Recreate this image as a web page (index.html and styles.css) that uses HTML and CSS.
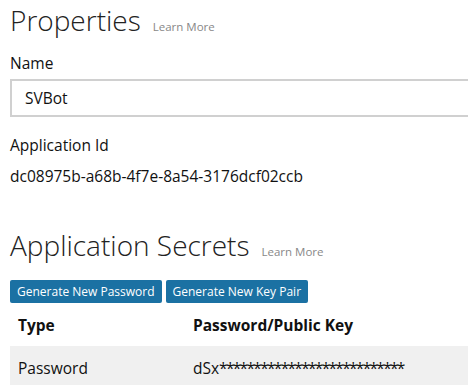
FILE: index.html
```html
<!DOCTYPE html>
<html lang="en">

<head>
    <meta charset="UTF-8">
    <title>Bot Properties</title>
    <link rel="stylesheet" href="styles.css">
</head>

<body>
    <main class="panel">
        <div class="section-head">
            <h1 class="section-title">Properties</h1>
            <a href="#" class="learn-more">Learn More</a>
        </div>

        <label class="field-label" for="bot-name">Name</label>
        <input class="text-input" id="bot-name" type="text" value="SVBot">

        <div class="field-label id-label">Application Id</div>
        <div class="field-value">dc08975b-a68b-4f7e-8a54-3176dcf02ccb</div>

        <div class="section-head secrets">
            <h1 class="section-title">Application Secrets</h1>
            <a href="#" class="learn-more">Learn More</a>
        </div>

        <div class="actions">
            <button class="btn">Generate New Password</button>
            <button class="btn">Generate New Key Pair</button>
        </div>

        <table class="secrets-table">
            <thead>
                <tr>
                    <th class="col-type">Type</th>
                    <th>Password/Public Key</th>
                </tr>
            </thead>
            <tbody>
                <tr>
                    <td>Password</td>
                    <td>dSx<span class="mask">***************************</span></td>
                </tr>
            </tbody>
        </table>
    </main>
</body>

</html>
```

FILE: styles.css
```css
* {
    margin: 0;
    padding: 0;
    box-sizing: border-box;
    font-family: 'Open Sans', 'Noto Sans', sans-serif;
}

body {
    background-color: #fff;
    color: #111;
    overflow: hidden;
}

.panel {
    padding: 0 0 0 10px;
    width: 100%;
}

.section-head {
    display: flex;
    align-items: baseline;
    gap: 12px;
    height: 40px;
}

.section-title {
    font-size: 28px;
    font-weight: 300;
    line-height: 40px;
    color: #222;
}

.learn-more {
    font-size: 11.5px;
    color: #888;
    text-decoration: none;
}

.secrets {
    margin-top: 39px;
}

.field-label {
    display: block;
    font-size: 15.5px;
    margin-top: 13px;
    line-height: 20px;
}

.id-label {
    margin-top: 18px;
}

.field-value {
    font-size: 15.5px;
    margin-top: 11px;
    line-height: 20px;
}

.text-input {
    display: block;
    width: 100%;
    height: 38px;
    margin-top: 6px;
    border: 2px solid #d0d0d0;
    border-right: none;
    padding: 0 13px;
    font-size: 15.5px;
    color: #111;
    outline: none;
}

.actions {
    display: flex;
    gap: 4px;
    margin-top: 15px;
}

.btn {
    background-color: #1b71a3;
    color: #fff;
    border: none;
    border-radius: 2px;
    height: 23px;
    padding: 0 7px;
    font-size: 12px;
}

.secrets-table {
    border-collapse: collapse;
    width: 100%;
    margin-top: 5px;
    font-size: 15.5px;
}

.secrets-table th {
    text-align: left;
    font-weight: 700;
    padding: 0 8px 4px;
    height: 38px;
}

.secrets-table th.col-type {
    width: 175px;
}

.secrets-table td {
    background-color: #f0f0f0;
    padding: 0 8px;
    height: 44px;
}

.mask {
    letter-spacing: -1.7px;
}
```
